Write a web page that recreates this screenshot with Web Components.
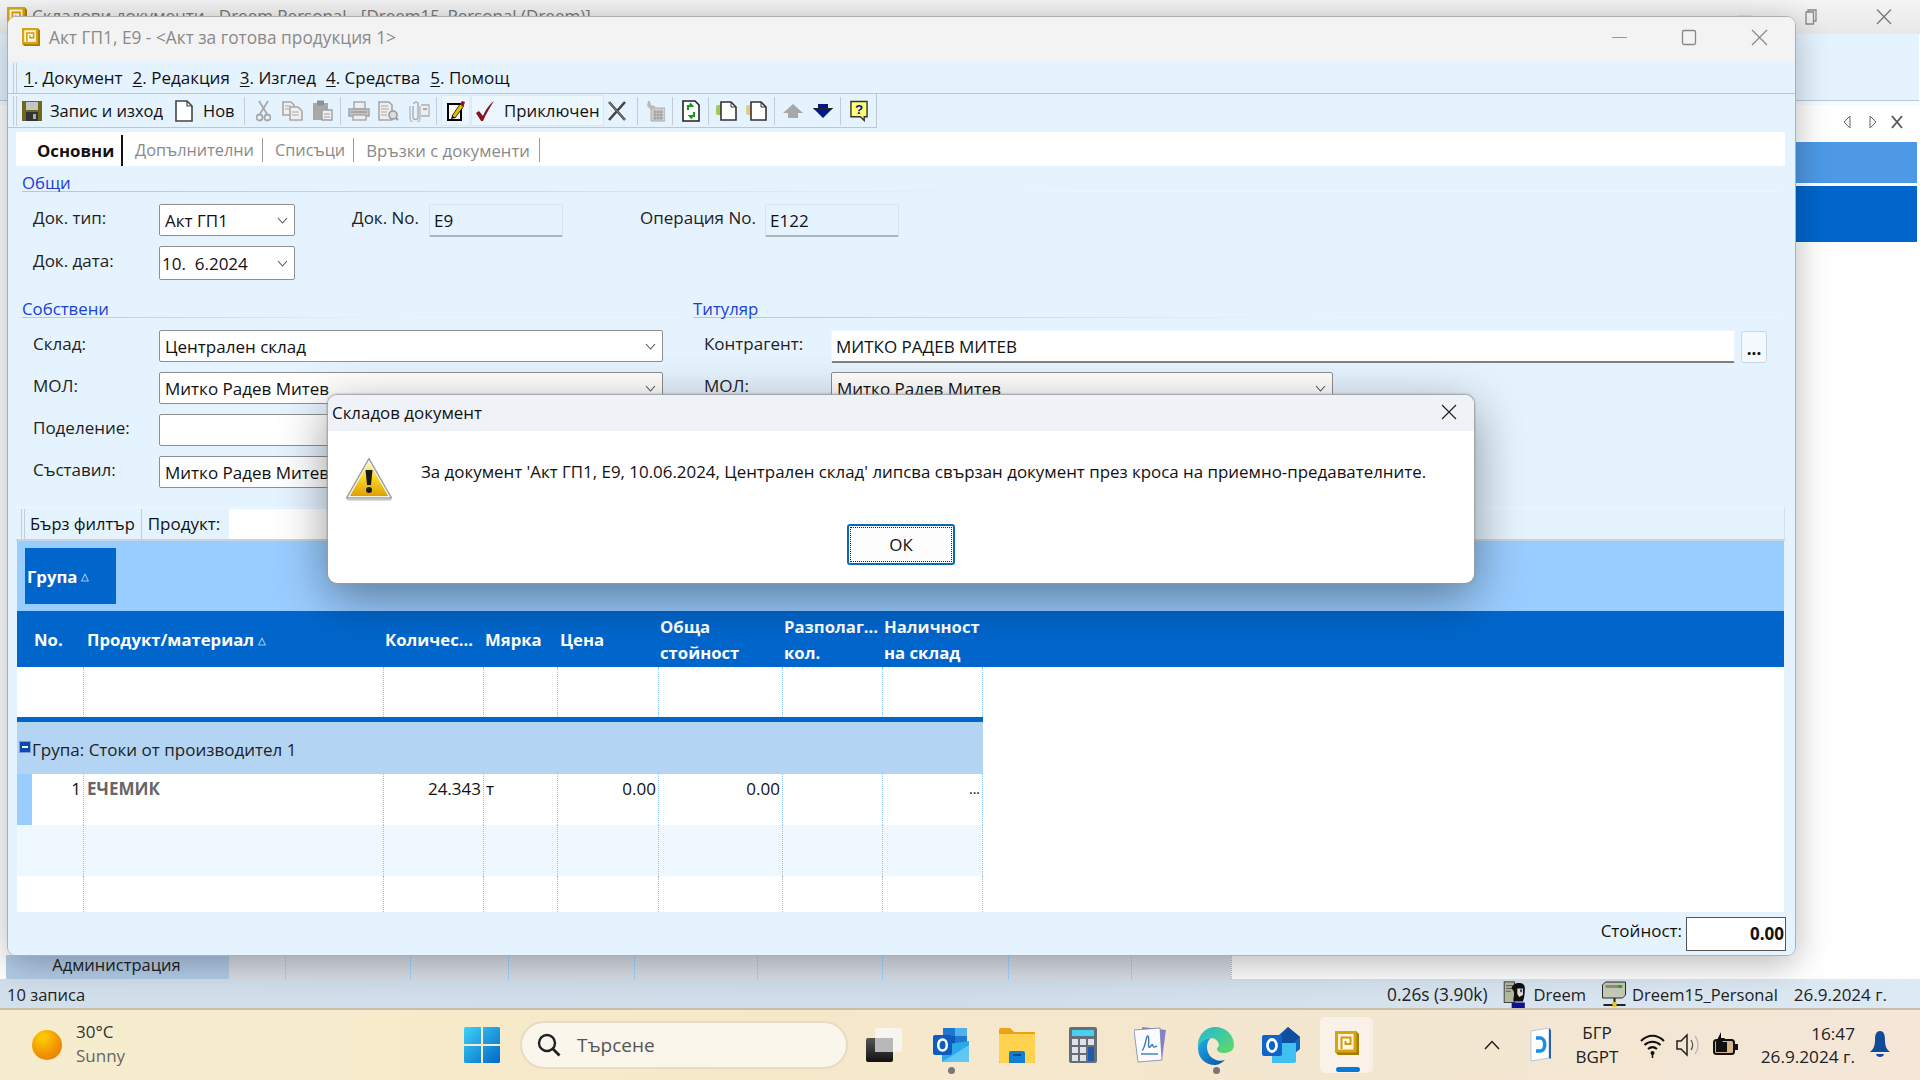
<!DOCTYPE html>
<html lang="bg"><head><meta charset="utf-8"><title>Dreem</title>
<style>
html,body{margin:0;padding:0;width:1920px;height:1080px;overflow:hidden;background:#fff;font-family:"Open Sans","Noto Sans",sans-serif;font-size:17px;color:#111}
</style></head><body>
<desk-top></desk-top>
<script>
const ICONS={
app:`<svg viewBox="0 0 24 24"><path d="M0 0H21L24 3V24H3L0 21Z" fill="#a87c08"/><rect x="0" y="0" width="21.500" height="21.500" fill="#d8a410"/><rect x="3" y="3" width="15.500" height="15.500" fill="#fff6e0"/><path d="M6.500 18V6.500H15.500V13H10.500V10" fill="none" stroke="#cf9a0c" stroke-width="2"/></svg>`,
floppy:`<svg viewBox="0 0 20 20"><path d="M0 0H20V20H0Z" fill="#6a6a1c"/><rect x="4" y="1" width="12" height="8" fill="#c4c4c4"/><rect x="4" y="11" width="12" height="9" fill="#333"/><rect x="11" y="13" width="3" height="5" fill="#aaa"/></svg>`,
doc:`<svg viewBox="0 0 18 22"><path d="M1 1H12L17 6V21H1Z" fill="#fff" stroke="#444" stroke-width="1.6"/><path d="M12 1V6H17" fill="none" stroke="#444" stroke-width="1.2"/></svg>`,
cut:`<svg viewBox="0 0 15 22"><g fill="none" stroke="#a8a8a8" stroke-width="1.8"><path d="M3 1L11 14M12 1L4 14"/><circle cx="3.5" cy="17.5" r="3"/><circle cx="11.5" cy="17.5" r="3"/></g></svg>`,
copy:`<svg viewBox="0 0 21 20"><g fill="#f0f0f0" stroke="#a8a8a8" stroke-width="1.6"><path d="M1 1H9L12 4V14H1Z"/><path d="M8 6H16L20 10V19H8Z"/></g><path d="M3 5H9M3 8H7M10 11H17M10 14H17" stroke="#a8a8a8"/></svg>`,
paste:`<svg viewBox="0 0 22 21"><path d="M1 3H16V20H1Z" fill="#a8a8a8"/><rect x="5" y="0.5" width="7" height="5" fill="#8f8f8f"/><path d="M10 10H20V20H10Z" fill="#efefef" stroke="#a0a0a0" stroke-width="1.4"/><path d="M12 14H18M12 17H18" stroke="#a0a0a0"/></svg>`,
print:`<svg viewBox="0 0 22 20"><path d="M6 1H17V8H6Z" fill="#eee" stroke="#aaa" stroke-width="1.5"/><path d="M1 8H21V15H1Z" fill="#c4c4c4" stroke="#a4a4a4" stroke-width="1.5"/><path d="M5 14H18V19H5Z" fill="#eee" stroke="#aaa" stroke-width="1.5"/><path d="M3 11H19" stroke="#888"/></svg>`,
prev:`<svg viewBox="0 0 21 20"><path d="M1 1H11L14 4V19H1Z" fill="#eee" stroke="#a8a8a8" stroke-width="1.6"/><path d="M3 5H10M3 8H11M3 11H9M3 14H9" stroke="#a8a8a8"/><circle cx="15" cy="14" r="4" fill="#ddd" stroke="#999" stroke-width="1.6"/><path d="M18 17L20 19" stroke="#999" stroke-width="2"/></svg>`,
att:`<svg viewBox="0 0 22 22"><path d="M5 6V17A2.5 2.5 0 0 0 10 17V4A2 2 0 0 0 6 4" fill="none" stroke="#b0b0b0" stroke-width="1.5"/><path d="M2 6V18A5 5 0 0 0 12 18V6" fill="none" stroke="#b0b0b0" stroke-width="1.2"/><path d="M13 5H21V16H13" fill="#eee" stroke="#b0b0b0" stroke-width="1.3"/><rect x="15" y="8" width="4" height="2" fill="#aaa"/></svg>`,
pen:`<svg viewBox="0 0 18 20"><path d="M1 3H14V19H1Z" fill="#fff" stroke="#000" stroke-width="2"/><path d="M5 15L13 3L16.500 5.500L8 17Z" fill="#e0c000" stroke="#000" stroke-width=".8"/><path d="M13 3L16.500 5.500L18 1L15 0Z" fill="#8a1030"/><path d="M4 18L8 17L5 15Z" fill="#000"/></svg>`,
check:`<svg viewBox="0 0 20 22"><path d="M1 13L4 11L8 16C11 9 14 5 19 1C15 7 11 14 8 21H6Z" fill="#8a1020"/></svg>`,
x:`<svg viewBox="0 0 20 20"><path d="M2 1L18 19M18 1L2 19" stroke="#444" stroke-width="2.6"/><path d="M2 1L18 19" stroke="#888" stroke-width="1"/></svg>`,
calc:`<svg viewBox="0 0 20 22"><path d="M6 8H20V21H6Z" fill="#d0d0d0" stroke="#aaa"/><path d="M8 12H18M8 15H18M8 18H18M10 10V20M13 10V20M16 10V20" stroke="#999"/><path d="M3 1L5 1L6 5L10 6V9L6 10L2 6Z" fill="#bbb"/></svg>`,
ref:`<svg viewBox="0 0 18 22"><path d="M1 1H13L17 5V21H1Z" fill="#fff" stroke="#222" stroke-width="1.6"/><path d="M6 10V6L10 6L8 3.5M12 12V16H8L10 18.5" fill="none" stroke="#119a22" stroke-width="2.2"/></svg>`,
docg:`<svg viewBox="0 0 21 20"><rect x="0" y="4" width="7" height="10" rx="2" fill="#9ccc55"/><path d="M5 1H15L20 6V19H5Z" fill="#fff" stroke="#333" stroke-width="1.6"/><path d="M15 1V6H20" fill="none" stroke="#333"/></svg>`,
docy:`<svg viewBox="0 0 21 20"><rect x="0" y="4" width="7" height="10" rx="2" fill="#e4c890"/><path d="M5 1H15L20 6V19H5Z" fill="#fff" stroke="#333" stroke-width="1.6"/><path d="M15 1V6H20" fill="none" stroke="#333"/></svg>`,
up:`<svg viewBox="0 0 20 14"><path d="M10 0L20 9H15V14H5V9H0Z" fill="#a8a8a8"/></svg>`,
down:`<svg viewBox="0 0 20 14"><path d="M0 4H5V0H15V4H20L10 14Z" fill="#00188a"/><path d="M0 4H20L18 6H2Z" fill="#222"/></svg>`,
help:`<svg viewBox="0 0 19 22"><path d="M1 1H18V17H15V21L11 17H1Z" fill="#ffff70" stroke="#333" stroke-width="1.5"/><text x="9.5" y="14" text-anchor="middle" font-family="Liberation Sans" font-weight="700" font-size="14" fill="#0010a0">?</text></svg>`,
warn:`<svg viewBox="0 0 48 44"><defs><linearGradient id="w" x1="0" y1="0" x2="0" y2="1"><stop offset="0" stop-color="#fff6a8"/><stop offset=".45" stop-color="#f8d828"/><stop offset="1" stop-color="#e0a000"/></linearGradient></defs><path d="M24 1.500L46.500 41H1.500Z" fill="#f4f2e8" stroke="#a0a090" stroke-width="1.500" stroke-linejoin="round"/><path d="M24 5.500L43 39H5Z" fill="url(#w)"/><path d="M2 42.500H46" stroke="#c4c4c4" stroke-width="2"/><path d="M20.500 13H27.500L26 28H22Z" fill="#1a1a1a"/><circle cx="24" cy="33" r="3" fill="#1a1a1a"/></svg>`,
win:`<svg viewBox="0 0 36 36"><defs><linearGradient id="wg" x1="0" y1="0" x2="1" y2="1"><stop offset="0" stop-color="#3fd0f7"/><stop offset="1" stop-color="#0068c8"/></linearGradient></defs><path d="M0 1.500A1.500 1.500 0 0 1 1.500 0H17V17H0ZM19 0H34.500A1.500 1.500 0 0 1 36 1.500V17H19ZM0 19H17V36H1.500A1.500 1.500 0 0 1 0 34.500ZM19 19H36V34.500A1.500 1.500 0 0 1 34.500 36H19Z" fill="url(#wg)"/></svg>`,
search:`<svg viewBox="0 0 24 24"><circle cx="10" cy="10" r="8" fill="none" stroke="#222" stroke-width="2.4"/><path d="M15.800 15.800L22.500 22.500" stroke="#222" stroke-width="2.8"/></svg>`,
task:`<svg viewBox="0 0 36 34"><defs><linearGradient id="tk" x1="0" y1="0" x2="0" y2="1"><stop offset="0" stop-color="#555"/><stop offset="1" stop-color="#111"/></linearGradient></defs><rect x="0" y="10" width="27" height="24" rx="2" fill="url(#tk)"/><rect x="9" y="0" width="27" height="24" rx="2" fill="#f6f6f4" opacity=".9"/><rect x="9" y="10" width="18" height="14" fill="#b8b8b8"/></svg>`,
outn:`<svg viewBox="0 0 36 36"><path d="M10 1H34V18H10Z" fill="#1f78d0"/><path d="M22 1H34V9H22Z" fill="#50b0f0"/><path d="M10 9H22V18H10Z" fill="#0a5cb0"/><path d="M9 18L36 14V35H9Z" fill="#2ca8e8"/><path d="M9 35L36 18V35Z" fill="#60c8f0"/><rect x="0" y="8" width="19" height="20" rx="2" fill="#0f5cc0"/><ellipse cx="9.500" cy="18" rx="4.300" ry="5.500" fill="none" stroke="#fff" stroke-width="2.600"/></svg>`,
folder:`<svg viewBox="0 0 36 36"><path d="M0 3A2 2 0 0 1 2 1H11L15 5H36V36H0Z" fill="#e8a414"/><path d="M0 7H36V34A2 2 0 0 1 34 36H2A2 2 0 0 1 0 34Z" fill="#ffd24f"/><path d="M10 26A2 2 0 0 1 12 24H24A2 2 0 0 1 26 26V36H10Z" fill="#0f7fd6"/><rect x="14" y="27" width="8" height="2" fill="#054a8c"/></svg>`,
calcb:`<svg viewBox="0 0 28 36"><rect width="28" height="36" rx="2" fill="#666e78"/><rect x="3" y="3" width="22" height="6" fill="#48d0f0"/><g fill="#dfe3e8"><rect x="3" y="12" width="6" height="6"/><rect x="11" y="12" width="6" height="6"/><rect x="19" y="12" width="6" height="6"/><rect x="3" y="20" width="6" height="6"/><rect x="11" y="20" width="6" height="6"/><rect x="3" y="28" width="6" height="6"/><rect x="11" y="28" width="6" height="6"/></g><rect x="19" y="20" width="6" height="14" fill="#1e5aa8"/></svg>`,
note:`<svg viewBox="0 0 32 36"><path d="M8 0L32 3L28 32L10 30Z" fill="#8a80c8"/><path d="M0 3L26 1L28 33L4 35Z" fill="#fbfbff" stroke="#5b7a9a" stroke-width=".7"/><path d="M8 23C11 23 12 8 14 9C16 10 13 22 16 20C18 18 18 16 19 19C20 21 21 20 23 19" fill="none" stroke="#3a7ab0" stroke-width="1.4"/><path d="M7 27H24" stroke="#3a7ab0" stroke-width="1.4"/></svg>`,
edge:`<svg viewBox="0 0 37 38"><defs><linearGradient id="e1" x1="0" y1="0" x2="1" y2="1"><stop offset="0" stop-color="#1fb0e8"/><stop offset="1" stop-color="#0a4fa8"/></linearGradient><linearGradient id="e2" x1="0" y1="0" x2="1" y2="1"><stop offset="0" stop-color="#22b8d8"/><stop offset="1" stop-color="#62dc60"/></linearGradient></defs><path d="M18 0C29 0 37 8 37 18C37 24 32 26 27 26C22 26 20 24 20 22C20 21 21 20 22 19C22 14 18 11 14 11C7 11 3 16 1 21C0 9 8 0 18 0Z" fill="url(#e2)"/><path d="M1 21C3 14 9 11 14 11C11 13 10 17 10 20C10 29 18 36 28 33C24 37 20 38 18 38C8 38 1 31 1 21Z" fill="url(#e1)"/></svg>`,
out:`<svg viewBox="0 0 38 36"><path d="M10 14L26 0L38 10V22L26 32H14Z" fill="#1066b8"/><path d="M26 0L38 10L20 26L12 16Z" fill="#0f4fa0"/><path d="M10 16H34V34A2 2 0 0 1 32 36H10Z" fill="#3fc0f0"/><rect x="0" y="8" width="20" height="21" rx="2" fill="#0f64cc"/><ellipse cx="10" cy="18.500" rx="4.500" ry="6" fill="none" stroke="#fff" stroke-width="2.800"/></svg>`,
dee:`<svg viewBox="0 0 22 34"><path d="M2 3L20 0V30L2 33Z" fill="#fff" stroke="#b8c8d8"/><path d="M20 0V30L22 31V2Z" fill="#2a60b0"/><path d="M7 10H12C17 12 17 21 12 23H7" fill="none" stroke="#1890e8" stroke-width="3.500"/></svg>`,
wifi:`<svg viewBox="0 0 25 26"><g fill="none" stroke="#111" stroke-width="2"><path d="M1 9C8 2 17 2 24 9"/><path d="M4.500 13C9 8.500 16 8.500 20.500 13"/><path d="M8 17C11 14.500 14 14.500 17 17"/></g><circle cx="12.500" cy="21" r="2" fill="#111"/><path d="M12.500 21V26" stroke="#111" stroke-width="1.500"/></svg>`,
vol:`<svg viewBox="0 0 24 26"><path d="M1 9H5L11 3V23L5 17H1Z" fill="none" stroke="#222" stroke-width="1.500"/><path d="M15 8C17 11 17 15 15 18" fill="none" stroke="#555" stroke-width="1.300"/><path d="M19 4C23 9 23 17 19 22" fill="none" stroke="#bbb" stroke-width="1.300"/></svg>`,
batt:`<svg viewBox="0 0 25 26"><rect x="1" y="8" width="20" height="14" rx="2.500" fill="#d8b48c" stroke="#111" stroke-width="2"/><rect x="3" y="10" width="11" height="10" fill="#111"/><rect x="22" y="12" width="3" height="6" fill="#111"/><path d="M8 0L3 10H7L5 16L12 6H8Z" fill="#111"/></svg>`,
bell:`<svg viewBox="0 0 20 30"><path d="M10 1C14 1 15 5 15 10C15 15 16 19 20 22H0C4 19 5 15 5 10C5 5 6 1 10 1Z" fill="#114a98"/><path d="M6 24H14C13.500 28 6.500 28 6 24Z" fill="#114a98"/></svg>`,
user:`<svg viewBox="0 0 24 32"><rect x="1" y="2" width="11" height="22" fill="#b4b89c" stroke="#3a3a3a"/><path d="M3 6H10M3 9H10M3 12H8" stroke="#555"/><path d="M9 9C9 2 23 1 23 8C23 13 23 17 21 23H11C10 18 14 14 9 9Z" fill="#111"/><path d="M15 9H21V16L17 18L15 15Z" fill="#e8dcd0"/><rect x="18" y="10" width="2" height="3" fill="#2040c0"/><path d="M9 24H23V32H9Z" fill="#10108a"/></svg>`,
net:`<svg viewBox="0 0 24 28"><path d="M3 1H23V14L20 17H0V4Z" fill="#c4cab4" stroke="#2a2a2a"/><rect x="3" y="4" width="17" height="3" fill="#8a9078"/><rect x="16" y="4" width="3" height="3" fill="#19b019"/><path d="M12 17V24M1 24H23" stroke="#222" stroke-width="2"/><rect x="10" y="21" width="4" height="5" fill="#e8c820"/></svg>`
};
function def(name,css,html){customElements.define(name,class extends HTMLElement{connectedCallback(){if(this.shadowRoot)return;this.attachShadow({mode:'open'}).innerHTML=`<style>:host{display:block;box-sizing:border-box}*{box-sizing:border-box}${css}</style>`+(typeof html==='function'?html(this):html)}})}
const a=(e,n,d='')=>e.getAttribute(n)??d;

def('x-icon',`:host{display:inline-block;flex:none;line-height:0}svg{display:block;width:100%;height:100%}`,e=>ICONS[a(e,'n')]);

/* ---------- background window ---------- */
def('back-window',`
:host{position:absolute;left:0;top:0;width:1920px;height:979px;display:flex;flex-direction:column;background:#fff}
.title{height:34px;background:linear-gradient(#f4f4f4,#e8e8e8);display:flex;align-items:flex-start;position:relative;padding-left:32px;font-size:17px;color:#777}
.title span{margin-top:4px;white-space:nowrap}
.title x-icon{position:absolute;left:7px;top:7px;width:20px;height:20px}
.ctl{position:absolute;top:0;left:0;width:100%;height:100%}
.bars{height:67px;background:#e5f3ff;border-bottom:1px solid #b8c8d6;margin-right:1px}
.lite{height:4px;background:#f6fbff}
.tabs{height:34px;background:#fff;margin:0 3px 0 16px;display:flex;justify-content:flex-end;align-items:center;padding-right:13px}
.b1{height:41px;margin:3px 3px 3px 16px;background:#4d99e6}
.b2{height:56px;margin:0 3px 0 16px;background:#0066cc}
.body{flex:1}
.foot{height:24px;display:flex;background:linear-gradient(90deg,#d9dde6 0,#d9dde6 1225px,#fff 1225px);margin-left:6px}
.admin{width:223px;background:#b3cde8;color:#222;text-align:center;line-height:20px;padding-right:2px;white-space:nowrap;font-size:16.500px}
.cols{flex:1;position:relative;margin-left:6px}
.cols i{position:absolute;top:0;bottom:0;border-left:1px dotted #8cc4f2}
`,`<div class="title"><x-icon n="app"></x-icon><span>Складови документи - Dreem Personal - [Dreem15_Personal (Dreem)]</span>
<svg class="ctl" viewBox="0 0 1920 34"><path d="M1738 16.500H1752" stroke="#888" stroke-width="1.300"/><path d="M1806 12H1813.500V24H1806ZM1808 12V10H1816V21H1813.500" fill="none" stroke="#888" stroke-width="1.300"/><path d="M1877 9.500L1891 24M1891 9.500L1877 24" stroke="#777" stroke-width="1.300"/></svg></div>
<div class="bars"></div><div class="lite"></div>
<div class="tabs"><svg width="8" height="14" viewBox="0 0 8 14"><path d="M7 1L1 7L7 13Z" fill="none" stroke="#666"/></svg><svg width="8" height="14" viewBox="0 0 8 14" style="margin-left:18px"><path d="M1 1L7 7L1 13Z" fill="none" stroke="#666"/></svg><svg width="14" height="14" viewBox="0 0 14 14" style="margin-left:13px"><path d="M2 1L12 13M12 1L2 13" stroke="#555" stroke-width="1.800"/></svg></div>
<div class="b1"></div><div class="b2"></div><div class="body"></div>
<div class="foot"><div class="admin">Администрация</div><div class="cols"><i style="left:50px"></i><i style="left:175px"></i><i style="left:273px"></i><i style="left:399px"></i><i style="left:522px"></i><i style="left:647px"></i><i style="left:773px"></i><i style="left:896px"></i><i style="left:996px"></i></div></div>`);

/* ---------- form widgets ---------- */
def('win-title',`:host{height:44px;background:#f3f3f3;display:flex;align-items:center;padding-left:14px;color:#8a8a8a;font-size:17.300px;position:relative;white-space:nowrap}
x-icon{width:18px;height:18px;margin-right:9px;margin-top:-4px}span{margin-top:-3px}
svg.c{position:absolute;right:0;top:0}`,`<x-icon n="app"></x-icon><span>Акт ГП1, Е9 - &lt;Акт за готова продукция 1&gt;</span>
<svg class="c" width="190" height="44" viewBox="0 0 190 44"><path d="M7 20.500H22" stroke="#999" stroke-width="1.200"/><rect x="77.500" y="13.500" width="13" height="14" rx="1.500" fill="none" stroke="#888" stroke-width="1.300"/><path d="M147 13L162 28M162 13L147 28" stroke="#888" stroke-width="1.200"/></svg>`);

def('win-menu',`:host{height:33px;background:#e5f3ff;border-bottom:1px solid #b8c8d6;display:flex;align-items:center;padding:1px 0 0 5px;position:relative;font-size:17px}
i{width:4px;height:30px;border-left:1px solid #c4ced6;border-right:1px solid #c4ced6;margin-right:7px}
span{white-space:nowrap}u{text-underline-offset:2px}
span+span{margin-left:10px}`,`<i></i><span><u>1</u>. Документ</span><span><u>2</u>. Редакция</span><span><u>3</u>. Изглед</span><span><u>4</u>. Средства</span><span><u>5</u>. Помощ</span>`);

def('win-tools',`:host{height:34px;width:869px;background:#e5f3ff;border-right:1px solid #b8c8d6;border-bottom:1px solid #b8c8d6;display:flex;align-items:center;padding-left:5px;font-size:16.500px}
.g{width:4px;height:30px;border-left:1px solid #c4ced6;border-right:1px solid #c4ced6;flex:none}
.s{width:1px;height:28px;background:#c2ccd6;flex:none}
.t{white-space:nowrap;flex:none}
.box{flex:none;height:31px;background:#ecf6ff;border:1px solid #d8e8f4;display:flex;align-items:center}
`,()=>{
const it=[['g',0,4],['i','floppy',5,20,20],['t','Запис и изход',8,114],['i','doc',11,18,22],['t','Нов',10,33],['s',8],['i','cut',11,15,22],['i','copy',11,21,20],['i','paste',9,22,21],['s',6],['i','print',7,22,20],['i','prev',8,21,20],['i','att',9,22,22],['s',6]];
const it2=[['i','x',3,20,20],['s',10],['i','calc',7,20,22],['s',7],['i','ref',9,18,22],['s',8],['i','docg',7,21,20],['i','docy',9,21,20],['s',7],['i','up',8,20,14],['i','down',10,20,14],['s',7],['i','help',9,18,22]];
const r=l=>l.map(x=>x[0]=='g'?`<div class="g"></div>`:x[0]=='s'?`<div class="s" style="margin-left:${x[1]}px"></div>`:x[0]=='t'?`<div class="t" style="margin-left:${x[2]}px;width:${x[3]}px">${x[1]}</div>`:`<x-icon n="${x[1]}" style="margin-left:${x[2]}px;width:${x[3]}px;height:${x[4]}px"></x-icon>`).join('');
return r(it)+`<div class="box" style="margin-left:4px;width:29px;justify-content:center"><x-icon n="pen" style="width:18px;height:22px"></x-icon></div><div class="box" style="margin-left:1px;width:133px;padding-left:3px"><x-icon n="check" style="width:20px;height:22px"></x-icon><div class="t" style="margin-left:9px;font-size:16.800px">Приключен</div></div>`+r(it2);
});

def('doc-tabs',`:host{height:34px;margin:4px 10px 0 8px;background:#fff;display:flex;align-items:stretch;padding-left:10px;font-size:16.300px;color:#8a8a8a}
span{white-space:nowrap;display:flex;align-items:center;padding:0 8px 0 12px;border-right:1px solid #9a9a9a;margin:6px 0 4px}
span.l{font-size:16.700px;padding-right:9px}
b{color:#111;display:flex;align-items:center;width:97px;padding-left:11px;border-right:2px solid #111;margin-top:3px;white-space:nowrap;font-weight:700;font-size:16.800px}`,`<b>Основни</b><span>Допълнителни</span><span>Списъци</span><span class="l">Връзки с документи</span>`);

def('group-title',`:host{color:#1a3fd8;font-size:16.800px;border-bottom:1px solid;border-image:linear-gradient(90deg,#bcc4cc,#eef6fc 60%) 1;height:26px;line-height:22px;padding-top:6px}`,`<slot></slot>`);

def('field-label',`:host{line-height:22px;margin-top:-4px;align-self:center;white-space:nowrap;color:#222}`,`<slot></slot>`);

def('combo-box',`:host{height:32px;background:#fff;border:1px solid #8f8f8f;border-radius:2px;display:flex;align-items:center;padding:0 6px 0 5px;overflow:hidden;color:#111;white-space:nowrap;position:relative}
.v{flex:1}svg{flex:none}`,`<div class="v"><slot></slot></div><svg width="11" height="7" viewBox="0 0 11 7"><path d="M1 1L5.500 6L10 1" fill="none" stroke="#555" stroke-width="1.100"/></svg>`);

def('text-box',`:host{height:33px;background:var(--bg,#e5f3ff);border:1px solid #d6e4ef;border-bottom:2px solid var(--line,#aab4bc);border-radius:2px;display:flex;align-items:center;padding:0 4px;white-space:nowrap;color:#111}`,`<slot></slot>`);

def('section-general',`:host{padding-left:14px;margin-right:15px}
.g{display:grid;grid-template-columns:126px 136px 57px 77px 134px 77px 125px 134px;grid-template-rows:32px 34px;row-gap:10px;margin-top:12px;padding-left:11px}`,`<group-title>Общи</group-title><div class="g">
<field-label>Док. тип:</field-label><combo-box>Акт ГП1</combo-box><span></span><field-label>Док. No.</field-label><text-box>Е9</text-box><span></span><field-label>Операция No.</field-label><text-box>Е122</text-box>
<field-label>Док. дата:</field-label><combo-box style="height:34px;padding-left:2px">10.&nbsp; 6.2024</combo-box></div>`);

def('section-own',`:host{display:grid;grid-template-columns:658px 1fr;column-gap:13px;padding-left:14px;margin:12px 15px 0 0}
.r{display:grid;grid-template-columns:126px 504px;grid-auto-rows:32px;row-gap:10px;margin-top:12px;padding-left:11px}
.q{display:grid;grid-template-columns:127px 904px 6px 26px;grid-auto-rows:32px;row-gap:10px;margin-top:12px;padding-left:11px}
.q combo-box{width:502px}`,`<div><group-title>Собствени</group-title><div class="r">
<field-label>Склад:</field-label><combo-box>Централен склад</combo-box>
<field-label>МОЛ:</field-label><combo-box>Митко Радев Митев</combo-box>
<field-label>Поделение:</field-label><combo-box></combo-box>
<field-label>Съставил:</field-label><combo-box>Митко Радев Митев</combo-box></div></div>
<div><group-title>Титуляр</group-title><div class="q">
<field-label>Контрагент:</field-label><text-box style="--bg:#fff;--line:#808080;border-color:#f0f6fb;border-bottom-color:#808080">МИТКО РАДЕВ МИТЕВ</text-box><span></span><dots-btn></dots-btn>
<field-label>МОЛ:</field-label><combo-box>Митко Радев Митев</combo-box></div></div>`);

def('dots-btn',`:host{height:32px;background:#f4f9fd;border:1px solid #ccd6de;border-radius:3px;text-align:center;font-weight:700;line-height:34px;margin-top:1px;color:#111}`,`...`);

def('quick-filter',`:host{height:34px;margin:19px 10px 0 8px;border-top:1px solid #eef6fc;border-bottom:2px solid #c9d3dc;border-right:1px solid #d4e0ea;display:flex;align-items:center;padding-left:5px;font-size:16.500px}
.g{width:4px;height:30px;border-left:1px solid #c4ced6;border-right:1px solid #c4ced6}
.s{width:1px;height:30px;background:#c4ced6;margin:0 6px}
span{white-space:nowrap}
.p{width:75px;font-size:17px}
.i{width:300px;height:30px;background:#fff;margin-left:6px}
span.a{margin-left:5px}`,`<div class="g"></div><span class="a">Бърз филтър</span><div class="s"></div><span class="p">Продукт:</span><div class="i"></div>`);

/* ---------- grid ---------- */
const COLS='67px 300px 100px 74px 101px 124px 100px 100px';
def('data-grid',`:host{margin:0 11px 0 9px;flex:1;display:flex;flex-direction:column;background:#fff;position:relative}
.band{height:70px;background:#99ccff;padding:7px 0 0 8px}
.chip{width:91px;height:56px;background:#0066cc;color:#fff;font-weight:700;display:flex;align-items:center;padding-left:2px;font-size:16.700px;white-space:nowrap}
.tri{font-size:10px;margin-left:4px;font-weight:400}
.head{height:56px;background:#0066cc;color:#fff;font-weight:700;font-size:16.700px;display:grid;grid-template-columns:${COLS};padding-top:2px}
.head div{padding-left:1px;display:flex;align-items:center;line-height:26px;white-space:nowrap;overflow:hidden}
.rows{width:966px;flex:1;display:flex;flex-direction:column;position:relative}
.row{display:grid;grid-template-columns:${COLS}}
.row>div{border-right:1px dotted #8cc4f2;white-space:nowrap;padding:0 2px;line-height:30px;overflow:hidden}
.r{text-align:right}
.sep{height:5px;background:#0066cc;box-shadow:0 1px 0 #7a6a3a}
.grp{height:52px;background:#b3d4f2;display:flex;align-items:center;padding:2px 0 0 2px;color:#222;white-space:nowrap}
.m{width:12px;height:12px;background:#0a4ab0;margin-right:1px;margin-top:-4px;display:flex;align-items:center;justify-content:center;border:1px solid #7aa0d8}
.m:before{content:"";width:6px;height:1.500px;background:#fff}
.ind{background:linear-gradient(90deg,#99ccff 15px,transparent 15px)}
.alt{background:#f0f8ff}
.w{color:#666;font-weight:700}
.dots{text-align:right;font-size:14px}
`,`<div class="band"><div class="chip">Група<span class="tri">△</span></div></div>
<div class="head"><div style="padding-left:17px">No.</div><div style="padding-left:3px">Продукт/материал<span class="tri">△</span></div><div>Количес...</div><div>Мярка</div><div style="padding-left:2px">Цена</div><div>Обща<br>стойност</div><div>Разполаг...<br>кол.</div><div>Наличност<br>на склад</div></div>
<div class="rows">
<div class="row" style="height:50px"><div></div><div></div><div></div><div></div><div></div><div></div><div></div><div></div></div>
<div class="sep"></div>
<div class="grp"><span class="m"></span>Група: Стоки от производител 1</div>
<div class="row ind" style="height:51px"><div class="r">1</div><div class="w" style="padding-left:3px">ЕЧЕМИК</div><div class="r">24.343</div><div>т</div><div class="r">0.00</div><div class="r">0.00</div><div></div><div class="dots">...</div></div>
<div class="row alt" style="height:51px"><div></div><div></div><div></div><div></div><div></div><div></div><div></div><div></div></div>
<div class="row" style="flex:1"><div></div><div></div><div></div><div></div><div></div><div></div><div></div><div></div></div>
</div>`);

def('grid-foot',`:host{height:43px;background:#e5f3ff;display:flex;justify-content:flex-end;align-items:flex-start;padding:5px 9px 0 0}
span{margin:2px 4px 0 0}b{display:block;width:100px;height:34px;background:#fff;border:1px solid #555;text-align:right;line-height:32px;padding-right:1px}`,`<span>Стойност:</span><b>0.00</b>`);

def('doc-window',`:host{position:absolute;left:7px;top:16px;width:1789px;height:940px;border:1px solid #aeaeae;border-radius:9px;overflow:hidden;background:#e5f3ff;display:flex;flex-direction:column}`,`<win-title></win-title><win-menu></win-menu><win-tools></win-tools><doc-tabs></doc-tabs><section-general></section-general><section-own></section-own><quick-filter></quick-filter><data-grid></data-grid><grid-foot></grid-foot>`);

def('doc-shadow',`:host{position:absolute;left:7px;top:16px;width:1789px;height:940px;border-radius:9px;box-shadow:0 8px 34px rgba(0,0,0,.28)}`,``);

/* ---------- dialog ---------- */
def('msg-dialog',`:host{position:absolute;left:328px;top:395px;width:1146px;height:188px;background:#fff;border-radius:9px;box-shadow:0 0 2px 1px #9a9a9a,0 14px 50px rgba(0,0,0,.42);overflow:hidden;display:flex;flex-direction:column;font-size:16.900px}
.t{height:36px;background:#eff3f7;display:flex;align-items:center;justify-content:space-between;padding:0 17px 2px 4px;color:#111}
.m{display:flex;align-items:flex-start;padding:26px 0 0 17px;height:93px}
.m x-icon{width:48px;height:44px;flex:none}
.m span{margin:3px 0 0 28px;white-space:nowrap;color:#111}
.b{align-self:flex-start;margin-left:519px;width:108px;height:41px;border:2px solid #0a6bb0;border-radius:3px;display:flex;align-items:center;justify-content:center;outline:1px dotted #222;outline-offset:-4px;background:#fdfdfd;color:#111}
`,`<div class="t"><span>Складов документ</span><svg width="16" height="16" viewBox="0 0 16 16"><path d="M1 1L15 15M15 1L1 15" stroke="#222" stroke-width="1.200"/></svg></div>
<div class="m"><x-icon n="warn"></x-icon><span>За документ 'Акт ГП1, Е9, 10.06.2024, Централен склад' липсва свързан документ през кроса на приемно-предавателните.</span></div>
<div class="b">ОК</div>`);

/* ---------- status & taskbar ---------- */
def('status-bar',`:host{position:absolute;left:0;top:979px;width:1920px;height:29px;background:linear-gradient(90deg,#d2e0ec,#cfddea 50%,#dde9f3);display:flex;align-items:center;padding:2px 33px 0 7px;font-size:16.500px;color:#222;white-space:nowrap}
.sp{flex:1}x-icon{margin:0 6px 0 0}`,`<span>10 записа</span><div class="sp"></div><span style="font-size:17.300px">0.26s (3.90k)</span><x-icon n="user" style="width:25px;height:30px;margin-left:15px"></x-icon><span>Dreem</span><x-icon n="net" style="width:27px;height:28px;margin-left:15px;margin-right:4px"></x-icon><span>Dreem15_Personal</span><span style="margin-left:16px;font-size:17px">26.9.2024 г.</span>`);

def('task-bar',`:host{position:absolute;left:0;top:1008px;width:1920px;height:72px;background:linear-gradient(90deg,#f6edcf,#f6e9c9 35%,#f3e6cf 70%,#f5e6d8);border-top:2px solid #c8bfa9;display:flex;align-items:center;color:#333;white-space:nowrap}
.sun{width:30px;height:30px;border-radius:50%;background:radial-gradient(circle at 35% 25%,#ffd000,#f09000 60%,#e87000);margin:0 14px 0 32px;flex:none}
.w{line-height:24px;width:388px;margin-top:-2px}.w small{display:block;color:#666;font-size:17px}
.srch{width:328px;height:48px;margin:0 18px 0 20px;background:#faf6ec;border:2px solid #e6dcc4;border-radius:24px;display:flex;align-items:center;padding-left:15px;color:#555;font-size:19px}
.srch x-icon{width:24px;height:24px;margin-right:16px}
.it{position:relative;flex:none;height:36px}
.dot{position:absolute;left:50%;bottom:-11px;width:7px;height:7px;margin-left:-3px;border-radius:50%;background:#777}
.act{flex:none;width:50px;height:56px;margin-left:20px;background:#faf2e8;border-radius:5px;box-shadow:3px 0 0 #f8efe6;display:flex;align-items:center;justify-content:center;position:relative;padding:0 0 4px 3px}
.act:after{content:"";position:absolute;left:16px;bottom:1px;width:24px;height:5px;border-radius:3px;background:#0a78d8}
.lang{text-align:center;line-height:24px;width:46px;margin-left:23px;color:#222}
.clock{text-align:right;line-height:23px;width:117px;color:#222;font-size:17.200px;margin-top:-1px}
`,`<div class="sun"></div><div class="w">30°C<small>Sunny</small></div>
<x-icon n="win" style="width:36px;height:36px"></x-icon>
<div class="srch"><x-icon n="search"></x-icon>Търсене</div>
<x-icon n="task" style="width:36px;height:34px"></x-icon>
<div class="it" style="margin-left:31px;width:36px"><x-icon n="outn" style="width:36px;height:36px"></x-icon><i class="dot"></i></div>
<x-icon n="folder" style="width:36px;height:36px;margin-left:30px"></x-icon>
<x-icon n="calcb" style="width:28px;height:36px;margin-left:34px"></x-icon>
<x-icon n="note" style="width:32px;height:36px;margin-left:37px"></x-icon>
<div class="it" style="margin-left:31px;width:37px"><x-icon n="edge" style="width:37px;height:38px"></x-icon><i class="dot"></i></div>
<x-icon n="out" style="width:38px;height:36px;margin-left:28px"></x-icon>
<div class="act"><x-icon n="app" style="width:24px;height:28px"></x-icon></div>
<svg width="16" height="10" viewBox="0 0 16 10" style="margin-left:114px;flex:none"><path d="M1 9L8 1.500L15 9" fill="none" stroke="#222" stroke-width="1.500"/></svg>
<x-icon n="dee" style="width:22px;height:34px;margin-left:29px"></x-icon>
<div class="lang">БГР<br>BGPT</div>
<x-icon n="wifi" style="width:25px;height:26px;margin-left:20px"></x-icon>
<x-icon n="vol" style="width:24px;height:26px;margin-left:11px"></x-icon>
<x-icon n="batt" style="width:25px;height:26px;margin-left:13px"></x-icon>
<div class="clock">16:47<br>26.9.2024 г.</div>
<x-icon n="bell" style="width:20px;height:30px;margin-left:15px"></x-icon>`);

def('desk-top',`:host{position:relative;width:1920px;height:1080px;overflow:hidden}`,`<back-window></back-window><status-bar></status-bar><doc-shadow></doc-shadow><doc-window></doc-window><msg-dialog></msg-dialog><task-bar></task-bar>`);
</script>
</body></html>
